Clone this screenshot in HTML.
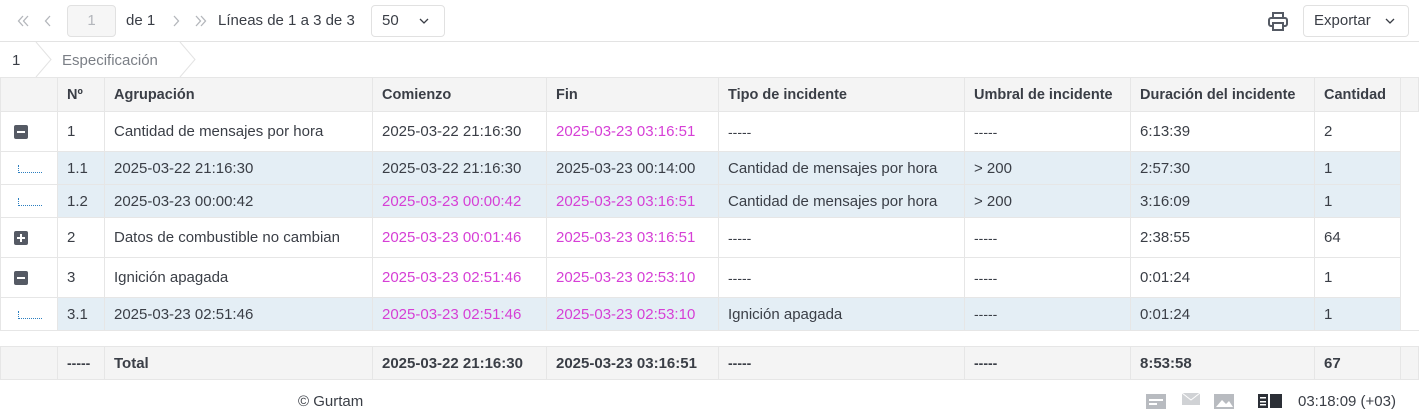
<!DOCTYPE html>
<html><head><meta charset="utf-8"><style>
*{box-sizing:border-box;margin:0;padding:0}
body{width:1419px;height:417px;background:#fff;font-family:"Liberation Sans",sans-serif;font-size:15px;color:#3a3e46;position:relative;overflow:hidden}
.tb{position:absolute;left:0;top:0;width:1419px;height:42px;border-bottom:1px solid #e3e3e3}
.abs{position:absolute}
.bc{position:absolute;top:42px;left:0;height:35px;width:1419px}
table{position:absolute;left:0;top:77px;border-collapse:collapse;table-layout:fixed}
td{border:1px solid #e6e6e6;padding:0 0 0 9px;white-space:nowrap;overflow:hidden}
tr.h td{background:#f4f4f4;height:34px;font-weight:bold;font-size:14.5px}
tr.r td{height:40px;background:#fff}
tr.c td{height:33px;background:#e4eef5}
tr.c td:first-child{background:#fff}
tr.t td{background:#f4f4f4;height:33px;font-weight:bold}
tr.b td{height:16px;border-left:none;border-right:none;background:#fff}
.m{color:#d63fd6}
.d{font-size:14px}
.ic{display:inline-block;width:14px;height:14px;background:#555a64;border-radius:2px;position:relative;vertical-align:middle;margin-left:4px}
.ic:before{content:"";position:absolute;left:3px;top:6px;width:8px;height:2px;background:#fff}
.ic.p:after{content:"";position:absolute;left:6px;top:3px;width:2px;height:8px;background:#fff}
.tr{display:inline-block;width:24px;height:8px;border-left:1px dotted #2c7fc0;border-bottom:1px dotted #2c7fc0;margin-left:8px;vertical-align:middle}
</style></head><body>
<div class="tb">
<svg class="abs" style="left:17px;top:14px" width="38" height="14" fill="none" stroke="#b3b6bb" stroke-width="1.3"><path d="M6 2 L1.5 7 L6 12 M11 2 L6.5 7 L11 12 M33 2 L28.5 7 L33 12"/></svg>
<div class="abs" style="left:67px;top:5px;width:49px;height:32px;border:1px solid #e1e1e1;border-radius:4px;background:#f6f6f6;color:#b3b6bb;text-align:center;line-height:30px">1</div>
<span class="abs" style="left:126px;top:12px">de 1</span>
<svg class="abs" style="left:172px;top:14px" width="40" height="14" fill="none" stroke="#b3b6bb" stroke-width="1.3"><path d="M2 2 L6.5 7 L2 12 M24 2 L28.5 7 L24 12 M29 2 L33.5 7 L29 12"/></svg>
<span class="abs" style="left:218px;top:12px">Líneas de 1 a 3 de 3</span>
<div class="abs" style="left:371px;top:5px;width:74px;height:32px;border:1px solid #e1e1e1;border-radius:4px;line-height:30px;padding-left:10px">50</div>
<svg class="abs" style="left:419px;top:18px" width="10" height="6" fill="none" stroke="#3a3e46" stroke-width="1.3"><path d="M1 1 L5 5 L9 1"/></svg>
<svg class="abs" style="left:1267px;top:12px" width="22" height="20" viewBox="0 0 22 20" fill="none" stroke="#555a64" stroke-width="2"><rect x="6" y="1" width="10" height="5"/><rect x="2" y="6" width="18" height="8" rx="2"/><rect x="6" y="11" width="10" height="7" fill="#fff"/></svg>
<div class="abs" style="left:1303px;top:5px;width:106px;height:32px;border:1px solid #e1e1e1;border-radius:4px;line-height:30px;padding-left:10px">Exportar</div>
<svg class="abs" style="left:1385px;top:18px" width="10" height="6" fill="none" stroke="#3a3e46" stroke-width="1.3"><path d="M1 1 L5 5 L9 1"/></svg>
</div>
<div class="bc">
<span class="abs" style="left:12px;top:10px">1</span>
<svg class="abs" style="left:34px;top:0" width="20" height="35"><path d="M2 0 L17 17.5 L2 35" fill="none" stroke="#e3e3e3"/></svg>
<span class="abs" style="left:62px;top:10px;color:#7b7f86">Especificación</span>
<svg class="abs" style="left:178px;top:0" width="20" height="35"><path d="M2 0 L17 17.5 L2 35" fill="none" stroke="#e3e3e3"/></svg>
</div>
<table>
<colgroup><col style="width:57px"><col style="width:47px"><col style="width:268px"><col style="width:174px"><col style="width:172px"><col style="width:246px"><col style="width:166px"><col style="width:184px"><col style="width:86px"><col style="width:18px"></colgroup>
<tr class="h"><td></td><td>Nº</td><td>Agrupación</td><td>Comienzo</td><td>Fin</td><td>Tipo de incidente</td><td>Umbral de incidente</td><td>Duración del incidente</td><td>Cantidad</td><td></td></tr>
<tr class="r"><td><span class="ic"></span></td><td>1</td><td>Cantidad de mensajes por hora</td><td>2025-03-22 21:16:30</td><td class="m">2025-03-23 03:16:51</td><td class="d">-----</td><td class="d">-----</td><td>6:13:39</td><td>2</td><td style="border:none"></td></tr>
<tr class="c"><td><span class="tr"></span></td><td>1.1</td><td>2025-03-22 21:16:30</td><td>2025-03-22 21:16:30</td><td>2025-03-23 00:14:00</td><td>Cantidad de mensajes por hora</td><td>&gt; 200</td><td>2:57:30</td><td>1</td><td style="border:none;background:#fff"></td></tr>
<tr class="c"><td><span class="tr"></span></td><td>1.2</td><td>2025-03-23 00:00:42</td><td class="m">2025-03-23 00:00:42</td><td class="m">2025-03-23 03:16:51</td><td>Cantidad de mensajes por hora</td><td>&gt; 200</td><td>3:16:09</td><td>1</td><td style="border:none;background:#fff"></td></tr>
<tr class="r"><td><span class="ic p"></span></td><td>2</td><td>Datos de combustible no cambian</td><td class="m">2025-03-23 00:01:46</td><td class="m">2025-03-23 03:16:51</td><td class="d">-----</td><td class="d">-----</td><td>2:38:55</td><td>64</td><td style="border:none"></td></tr>
<tr class="r"><td><span class="ic"></span></td><td>3</td><td>Ignición apagada</td><td class="m">2025-03-23 02:51:46</td><td class="m">2025-03-23 02:53:10</td><td class="d">-----</td><td class="d">-----</td><td>0:01:24</td><td>1</td><td style="border:none"></td></tr>
<tr class="c"><td><span class="tr"></span></td><td>3.1</td><td>2025-03-23 02:51:46</td><td class="m">2025-03-23 02:51:46</td><td class="m">2025-03-23 02:53:10</td><td>Ignición apagada</td><td class="d">-----</td><td>0:01:24</td><td>1</td><td style="border:none;background:#fff"></td></tr>
<tr class="b"><td colspan="10"></td></tr>
<tr class="t"><td></td><td class="d">-----</td><td>Total</td><td>2025-03-22 21:16:30</td><td>2025-03-23 03:16:51</td><td class="d">-----</td><td class="d">-----</td><td>8:53:58</td><td>67</td><td></td></tr>
</table>
<span class="abs" style="left:298px;top:393px">© Gurtam</span>
<svg class="abs" style="left:1146px;top:392px" width="100" height="18">
<rect x="0" y="2" width="20" height="15" fill="#b8bbc0"/><rect x="3" y="7" width="14" height="2" fill="#fff"/><rect x="3" y="11" width="8" height="2" fill="#fff"/>
<path d="M36 1 h18 v12 h-18z" fill="#d0d2d5"/><path d="M36 1 l9 7 l9 -7" stroke="#fff" fill="none"/>
<rect x="68" y="2" width="20" height="15" fill="#b8bbc0"/><path d="M70 15 l6-7 l4 4 l3-3 l4 6z" fill="#fff"/>
</svg>
<svg class="abs" style="left:1258px;top:394px" width="24" height="14"><rect x="0" y="0" width="10" height="14" fill="#2b2f36"/><rect x="12" y="0" width="12" height="14" fill="#2b2f36"/><rect x="2" y="3" width="6" height="1.5" fill="#fff"/><rect x="2" y="7" width="6" height="1.5" fill="#fff"/><rect x="2" y="10" width="6" height="1.5" fill="#fff"/></svg>
<span class="abs" style="left:1298px;top:393px">03:18:09 (+03)</span>
</body></html>
